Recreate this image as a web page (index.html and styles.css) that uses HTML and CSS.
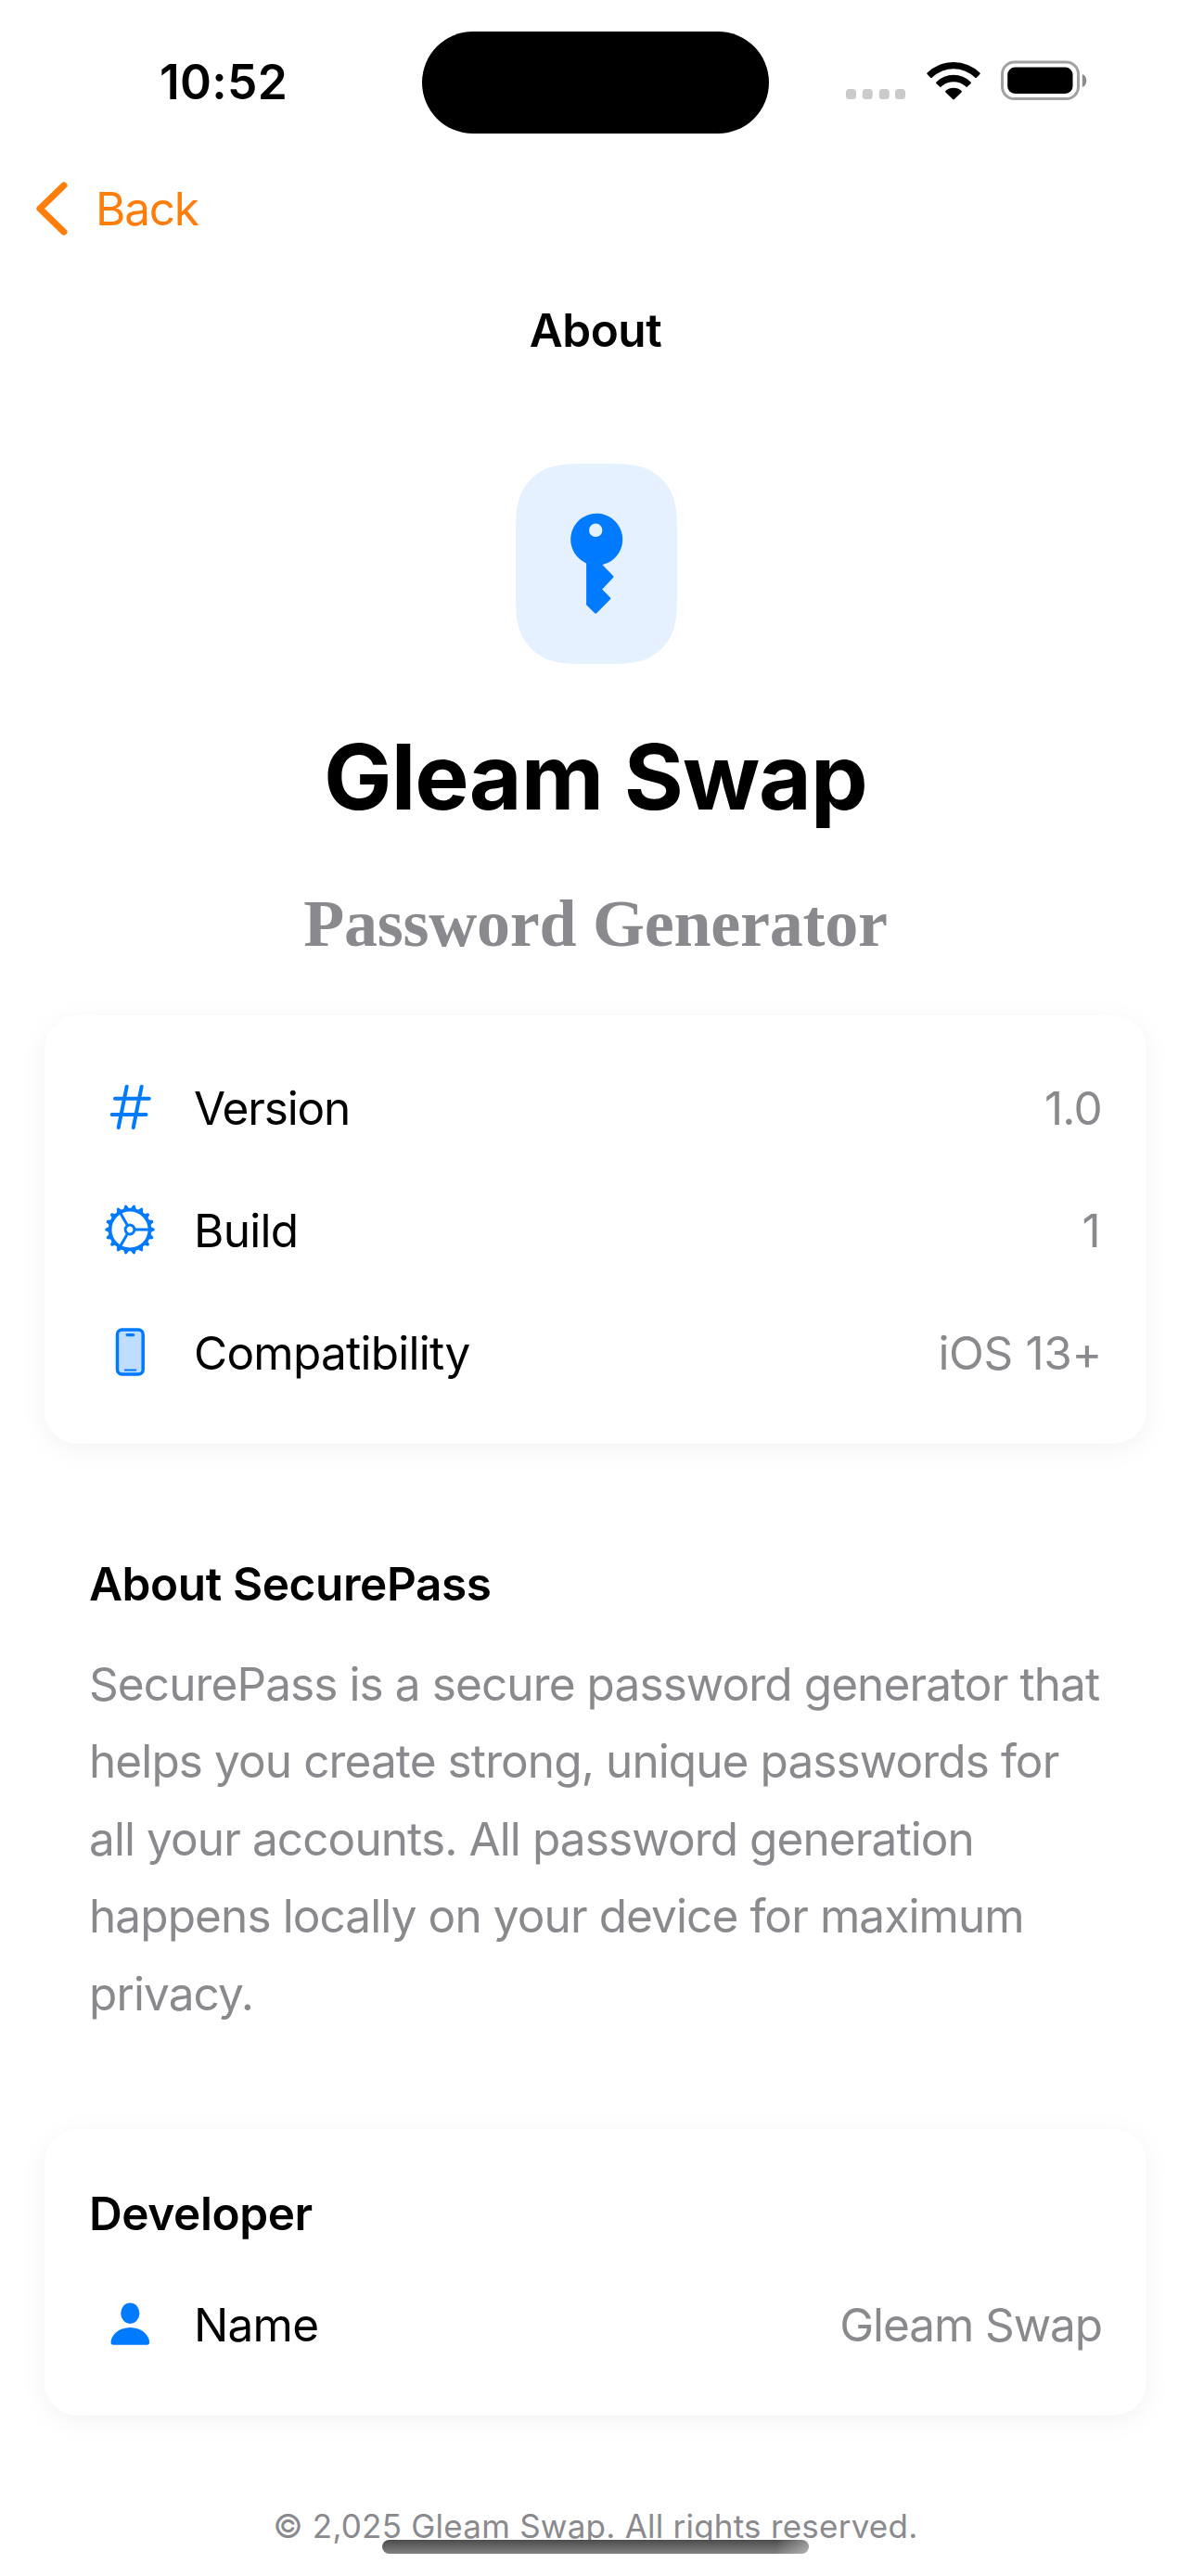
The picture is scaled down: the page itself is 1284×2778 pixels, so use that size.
FILE: index.html
```html
<!DOCTYPE html>
<html lang="en">
<head>
<meta charset="utf-8">
<title>About</title>
<link rel="stylesheet" href="styles.css">
</head>
<body>
<div class="screen">
  <header class="status">
    <span class="time">10:52</span>
    <span class="island"></span>
    <span class="indicators">
      <svg class="cell" width="64" height="44" viewBox="0 0 64 44"><g fill="#cbcbcb"><rect x="0" y="31" width="11" height="11" rx="3.5"/><rect x="17.8" y="31" width="11" height="11" rx="3.5"/><rect x="35.8" y="31" width="11" height="11" rx="3.5"/><rect x="53" y="31" width="11" height="11" rx="3.5"/></g></svg>
      <svg class="wifi" width="58" height="44" viewBox="0 0 58 44">
        <path d="M.6 13.6a40.6 40.6 0 0 1 56.8 0q.6.8 0 1.500l-3.600 3.600q-.7.600-1.500 0a33.500 33.500 0 0 0-46.600 0q-.8.600-1.500 0L.6 15.100q-.6-.700 0-1.500z"/>
        <path d="M10.400 23.400a26.600 26.600 0 0 1 37.200 0q.6.800 0 1.500l-3.700 3.700q-.7.600-1.500 0a19.600 19.600 0 0 0-26.800 0q-.8.600-1.500 0l-3.700-3.700q-.6-.700 0-1.500z"/>
        <path d="M20.400 33.100a12.900 12.900 0 0 1 17.200 0q.7.800 0 1.500l-7.700 7.400q-.9.800-1.800 0l-7.700-7.400q-.7-.700 0-1.500z"/>
      </svg>
      <svg class="battery" width="94" height="44" viewBox="0 0 94 44">
        <rect x="1.500" y="2" width="82" height="39.500" rx="13" fill="none" stroke="#a1a1a1" stroke-width="3"/>
        <rect x="7.200" y="7.600" width="70.300" height="28.300" rx="8"/>
        <path d="M87.800 15c6 2 6 12 0 14z" fill="#8b8b8b"/>
      </svg>
    </span>
  </header>

  <nav class="nav">
    <svg width="34" height="58" viewBox="0 0 34 58"><path d="M29.800 4L4 29l25.800 25" fill="none" stroke="#ff7d0a" stroke-width="7.200" stroke-linecap="round" stroke-linejoin="round"/></svg>
    <span class="back">Back</span>
  </nav>
  <div class="page-title"><span>About</span></div>

  <main>
    <svg class="app-icon" width="174" height="216" viewBox="0 0 174 216">
      <path fill="#e5f1ff" d="M87 0C62 0 49.500 0 36 4.300C21.300 9.600 9.600 21.300 4.300 36C0 49.500 0 62 0 87V129C0 154 0 166.500 4.300 180C9.600 194.700 21.300 206.400 36 211.700C49.500 216 62 216 87 216C112 216 124.500 216 138 211.700C152.700 206.400 164.400 194.700 169.700 180C174 166.500 174 154 174 129V87C174 62 174 49.500 169.700 36C164.400 21.300 152.700 9.600 138 4.300C124.500 0 112 0 87 0z"/>
      <path fill="#007aff" fill-rule="evenodd" d="M76.100 107.400A28 28 0 1 1 93.400 109L105.200 121.200Q106 122 105.200 122.800L93.200 135.400L102 144.600Q102.800 145.400 102 146.200L87.200 161.300Q86.200 162.200 85.200 161.300L76.100 152.200zM86.200 64.600a7.200 7.200 0 1 0 0 14.400a7.200 7.200 0 1 0 0-14.400z"/>
    </svg>
    <h1 class="name"><span>Gleam Swap</span></h1>
    <p class="tagline"><span>Password Generator</span></p>

    <section class="card info">
      <div class="row">
        <svg width="56" height="56" viewBox="0 0 56 56"><g fill="none" stroke="#007aff" stroke-width="4" stroke-linecap="round"><path d="M12 17.700h36.800M8.700 35h36.800M24.700 4.700l-9 44.300M40.700 4.700l-9 44.300"/></g></svg>
        <span class="label version">Version</span><span class="value">1.0</span>
      </div>
      <div class="row">
        <svg width="56" height="56" viewBox="-28 -27 56 56">
          <defs><path id="tooth" d="M22-3.200L26.200-1.300Q27.600 0 26.200 1.300L22 3.200z" fill="#007aff"/></defs>
          <g fill="none" stroke="#007aff">
            <circle r="21.400" stroke-width="3.700"/>
            <circle r="4.900" stroke-width="3"/>
            <path d="M6 0H21M-3-5.200L-10.500-18.200M-3 5.200L-10.500 18.200" stroke-width="2.900"/>
          </g>
          <use href="#tooth"/><use href="#tooth" transform="rotate(20)"/><use href="#tooth" transform="rotate(40)"/><use href="#tooth" transform="rotate(60)"/><use href="#tooth" transform="rotate(80)"/><use href="#tooth" transform="rotate(100)"/><use href="#tooth" transform="rotate(120)"/><use href="#tooth" transform="rotate(140)"/><use href="#tooth" transform="rotate(160)"/><use href="#tooth" transform="rotate(180)"/><use href="#tooth" transform="rotate(200)"/><use href="#tooth" transform="rotate(220)"/><use href="#tooth" transform="rotate(240)"/><use href="#tooth" transform="rotate(260)"/><use href="#tooth" transform="rotate(280)"/><use href="#tooth" transform="rotate(300)"/><use href="#tooth" transform="rotate(320)"/><use href="#tooth" transform="rotate(340)"/>
        </svg>
        <span class="label">Build</span><span class="value build">1</span>
      </div>
      <div class="row">
        <svg width="56" height="56" viewBox="0 0 56 56"><rect x="14.500" y="3" width="27.700" height="48" rx="5" fill="#bfdeff" stroke="#007aff" stroke-width="3.500"/><rect x="23.500" y="7" width="9.800" height="3.200" rx="1.600" fill="#007aff"/><path d="M22.700 46.500h11.600" stroke="#007aff" stroke-width="1.800" stroke-linecap="round"/></svg>
        <span class="label">Compatibility</span><span class="value platform">iOS 13+</span>
      </div>
    </section>

    <section class="about">
      <h2><span>About SecurePass</span></h2>
      <p><span>SecurePass is a secure password generator that</span><br><span>helps you create strong, unique passwords for</span><br><span>all your accounts. All password generation</span><br><span>happens locally on your device for maximum</span><br><span>privacy.</span></p>
    </section>

    <section class="card developer">
      <h2><span>Developer</span></h2>
      <div class="row">
        <svg width="56" height="56" viewBox="0 0 56 56"><g fill="#007aff"><ellipse cx="28.300" cy="15.700" rx="10.100" ry="11.200"/><path d="M28.300 31c12.500 0 20.800 8.600 20.800 16q0 2.800-2.600 2.800H10.100q-2.600 0-2.600-2.800c0-7.400 8.300-16 20.800-16z"/></g></svg>
        <span class="label">Name</span><span class="value author">Gleam Swap</span>
      </div>
    </section>
  </main>
  <footer class="footer"><span>© 2,025 Gleam Swap. All rights reserved.</span></footer>
  <div class="home"></div>
</div>
</body>
</html>
```
FILE: styles.css
```css
* { box-sizing: border-box; margin: 0; padding: 0; }
body { background: #fff; }
.screen {
  position: relative;
  width: 1284px;
  height: 2778px;
  overflow: hidden;
  font-family: Inter, "Liberation Sans", sans-serif;
  font-size: 49.5px;
  letter-spacing: -0.75px;
  color: #000;
}
svg { display: block; flex: none; }
.status {
  display: grid;
  grid-template-columns: 455px 374px 455px;
  align-items: center;
  height: 177px;
}
.time {
  padding: 0 0 2px 27px;
  text-align: center;
  font-size: 51.5px;
  font-weight: 600;
  letter-spacing: 0.3px;
}
.island { height: 110px; border-radius: 55px; background: #000; }
.indicators { display: flex; padding: 0 0 4px 83px; }
.wifi { margin-left: 23px; }
.battery { margin-left: 22px; }
.nav { display: flex; align-items: center; height: 96px; padding-left: 39px; }
.back { margin-left: 30px; letter-spacing: -1.2px; color: #ff7d0a; }
.page-title { height: 167px; line-height: 167px; text-align: center; font-weight: 600; letter-spacing: -0.5px; }
.app-icon { margin: 60px 0 0 556px; }
.name {
  margin-top: 62px;
  font-size: 98px;
  line-height: 120px;
  font-weight: 700;
  letter-spacing: -0.9px;
  text-align: center;
}
.tagline {
  margin-top: 55px;
  font: bold 72px/86px "Liberation Serif", serif;
  letter-spacing: -0.25px;
  text-align: center;
  color: #8a8a8e;
}
.card {
  margin: 0 48px;
  padding: 0 48px;
  border-radius: 36px;
  background: #fff;
  box-shadow: 0 6px 30px rgba(0, 0, 0, 0.05);
}
.row { display: flex; align-items: center; height: 132px; padding-left: 16px; }
.label { margin-left: 41px; }
.version { letter-spacing: -1.15px; }
.value { margin-left: auto; color: #8a8a8e; }
.build { padding-right: 2px; }
.platform { letter-spacing: -0.35px; }
.author { letter-spacing: -1.1px; }
.info { height: 462px; margin-top: 56px; padding-top: 34px; }
.about { margin: 121px 96px 0; }
h2 { font-size: 49.5px; line-height: 60px; font-weight: 600; letter-spacing: -0.4px; }
.about p {
  margin-top: 37px;
  line-height: 83.4px;
  white-space: nowrap;
  letter-spacing: -0.9px;
  color: #8a8a8e;
}
.developer { height: 309px; margin-top: 104px; padding-top: 61px; }
.developer .row { height: 60px; margin-top: 60px; }
.footer {
  margin-top: 97px;
  font-size: 35px;
  line-height: 44px;
  letter-spacing: 0.23px;
  text-align: center;
  color: #8a8a8e;
}
/* Translucent system bar drawn over the footer */
.home {
  position: absolute;
  left: 412px;
  top: 2739px;
  width: 460px;
  height: 15px;
  border-radius: 8px;
  background:
    linear-gradient(100deg, rgba(255, 255, 255, 0) 92%, rgba(255, 255, 255, 0.4)),
    linear-gradient(#4c4c4c, #808080);
}
```
